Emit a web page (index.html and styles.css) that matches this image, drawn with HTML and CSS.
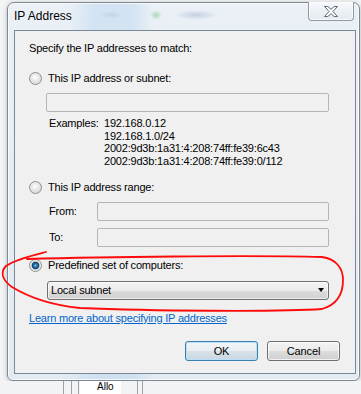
FILE: index.html
```html
<!DOCTYPE html>
<html>
<head>
<meta charset="utf-8">
<link rel="stylesheet" href="styles.css">
</head>
<body>
<div class="window">
  <div class="titlebar">
    <span class="title">IP Address</span>
    <div class="close">
      <svg width="14" height="11" viewBox="0 0 14 11"><polygon points="0.5,0.5 3.8,0.5 7,3.3 10.2,0.5 13.5,0.5 8.9,5.5 13.5,10.5 10.2,10.5 7,7.7 3.8,10.5 0.5,10.5 5.1,5.5" fill="#ffffff" stroke="#5d6874" stroke-width="1" stroke-linejoin="round"/></svg>
    </div>
  </div>
  <div class="client">
    <div class="heading">Specify the IP addresses to match:</div>
    <div class="radio-row r1"><span class="radio"></span><span>This IP address or subnet:</span></div>
    <div class="textbox tb-subnet"></div>
    <div class="examples">
      <span class="ex-label">Examples:</span>
      <div class="ex-list">
        <div>192.168.0.12</div>
        <div>192.168.1.0/24</div>
        <div>2002:9d3b:1a31:4:208:74ff:fe39:6c43</div>
        <div>2002:9d3b:1a31:4:208:74ff:fe39:0/112</div>
      </div>
    </div>
    <div class="radio-row r2"><span class="radio"></span><span>This IP address range:</span></div>
    <div class="range">
      <div class="range-row"><span class="range-label">From:</span><div class="textbox tb-range"></div></div>
      <div class="range-row"><span class="range-label">To:</span><div class="textbox tb-range"></div></div>
    </div>
    <div class="radio-row r3"><span class="radio checked"></span><span>Predefined set of computers:</span></div>
    <div class="combo"><span>Local subnet</span><span class="arrow"></span></div>
    <a class="link" href="#">Learn more about specifying IP addresses</a>
    <div class="buttons">
      <button class="btn default">OK</button>
      <button class="btn">Cancel</button>
    </div>
  </div>
</div>
<div class="desk-bottom">
  <div class="bg w63"></div>
  <div class="vline"></div>
  <div class="bg w7"></div>
  <div class="vline"></div>
  <div class="bg w6"></div>
  <div class="vline"></div>
  <div class="bg w1"></div>
  <div class="cell"><span>Allo</span></div>
  <div class="bg w16"></div>
  <div class="vline"></div>
  <div class="bg w4"></div>
  <div class="vline"></div>
  <div class="bg rest"></div>
</div>
<svg class="annotation" width="361" height="394" viewBox="0 0 361 394">
  <path d="M 27 259 C 100 257, 250 255, 322 257 C 336 259, 343 268, 343 280 C 343 295, 336 305, 322 309 C 280 312, 150 311, 80 308 C 50 305, 30 298, 12 287 C 2 280, 0 272, 6 266 C 16 259, 34 255, 46 252" fill="none" stroke="#ff0a0a" stroke-width="1.8" stroke-linecap="round" stroke-linejoin="round"/>
</svg>
</body>
</html>
```

FILE: styles.css
```css
html, body {
  margin: 0;
  padding: 0;
}
body {
  width: 361px;
  height: 394px;
  overflow: hidden;
  position: relative;
  background: #f3f4f6;
  font-family: "Liberation Sans", Arial, sans-serif;
  color: #000;
}

.window {
  margin: 2px 0 0 7px;
  width: 353px;
  height: 379px;
  box-sizing: border-box;
  border: 1px solid #7d8791;
  border-radius: 7px 7px 6px 6px;
  background:
    radial-gradient(ellipse 6px 5px at 148px 12px, rgba(120, 200, 130, 0.55), rgba(120, 200, 130, 0) 100%),
    radial-gradient(ellipse 22px 5px at 188px 12px, rgba(150, 170, 200, 0.45), rgba(150, 170, 200, 0) 100%),
    radial-gradient(ellipse 12px 4px at 103px 12px, rgba(170, 190, 215, 0.4), rgba(170, 190, 215, 0) 100%),
    linear-gradient(to right, rgba(255,255,255,0) 60px, rgba(190, 215, 240, 0.5) 85px, rgba(190, 215, 240, 0.5) 125px, rgba(255,255,255,0) 145px),
    linear-gradient(to bottom, #eaf0f6, #e2eaf2);
  box-shadow: 0 1px 5px rgba(0, 0, 0, 0.25), inset 0 0 0 1px rgba(255, 255, 255, 0.75);
  display: flex;
  flex-direction: column;
}

.titlebar {
  height: 27px;
  flex: none;
  display: flex;
  justify-content: space-between;
  align-items: flex-start;
  padding: 0 5px 0 6px;
}
.title {
  font-size: 12px;
  line-height: 14px;
  margin-top: 6px;
  color: #000;
}
.close {
  margin-top: -1px;
  width: 46px;
  height: 19px;
  box-sizing: border-box;
  border: 1px solid #8e99a5;
  border-top: none;
  border-radius: 0 0 4px 4px;
  background: linear-gradient(to bottom, #f6f8fb, #e4eaf0);
  box-shadow: inset 0 0 0 1px rgba(255, 255, 255, 0.7);
  display: flex;
  align-items: center;
  justify-content: center;
}
.close svg {
  display: block;
}

.client {
  margin: 0 3px 0 6px;
  height: 344px;
  flex: none;
  box-sizing: border-box;
  border: 1px solid #7b8896;
  background: #f0f0f0;
  font-size: 11px;
  letter-spacing: -0.2px;
  display: flex;
  flex-direction: column;
  align-items: flex-start;
}

.heading {
  margin: 11px 0 0 14px;
  line-height: 13px;
}

.radio-row {
  display: flex;
  align-items: center;
  height: 13px;
  line-height: 13px;
  margin-left: 14px;
  gap: 6px;
}
.r1 { margin-top: 17px; }
.r2 { margin-top: 13px; }
.r3 { margin-top: 12px; }

.radio {
  width: 13px;
  height: 13px;
  box-sizing: border-box;
  border-radius: 50%;
  border: 1px solid #8e8f8f;
  background: radial-gradient(circle at 45% 40%, #ffffff 0, #e6e6e6 45%, #cfcfcf 100%);
  flex: none;
}
.radio.checked {
  background: radial-gradient(circle at 50% 50%, #7cc3ef 0, #2a79b5 1.6px, #123f66 3.4px, #dcdcdc 4.2px, #f2f2f2 5.5px);
}

.textbox {
  box-sizing: border-box;
  height: 19px;
  border: 1px solid #b3b6b9;
  border-radius: 2px;
  background: #f0f0f0;
}
.tb-subnet {
  margin: 8px 0 0 31px;
  width: 283px;
}

.examples {
  display: flex;
  margin: 5px 0 0 34px;
  line-height: 12.7px;
}
.ex-label {
  width: 55px;
  flex: none;
}

.range {
  margin: 8px 0 0 34px;
  display: flex;
  flex-direction: column;
  gap: 7px;
}
.range-row {
  display: flex;
  align-items: center;
  height: 19px;
}
.range-label {
  width: 48px;
  flex: none;
}
.tb-range {
  width: 232px;
}

.combo {
  margin: 9px 0 0 32px;
  width: 282px;
  height: 19px;
  box-sizing: border-box;
  border: 1px solid #707070;
  border-radius: 3px;
  background: linear-gradient(to bottom, #f3f3f3 0, #ebebeb 50%, #dddddd 50%, #cfcfcf 100%);
  box-shadow: inset 0 0 0 1px rgba(255, 255, 255, 0.6);
  display: flex;
  align-items: center;
  justify-content: space-between;
  padding: 0 4px 0 3px;
  line-height: 13px;
}
.arrow {
  width: 0;
  height: 0;
  border-left: 3.5px solid transparent;
  border-right: 3.5px solid transparent;
  border-top: 4px solid #000;
}

.link {
  margin: 12px 0 0 14px;
  line-height: 13px;
  color: #0066cc;
  text-decoration: underline;
}

.buttons {
  margin-top: 16px;
  align-self: stretch;
  display: flex;
  justify-content: flex-end;
  gap: 9px;
  padding-right: 15px;
}
.btn {
  width: 73px;
  height: 20px;
  box-sizing: border-box;
  padding: 0;
  border: 1px solid #707070;
  border-radius: 3px;
  background: linear-gradient(to bottom, #f3f3f3 0, #ebebeb 50%, #dddddd 50%, #cfcfcf 100%);
  box-shadow: inset 0 0 0 1px rgba(255, 255, 255, 0.7);
  font-family: "Liberation Sans", Arial, sans-serif;
  font-size: 11px;
  letter-spacing: -0.1px;
  color: #000;
  line-height: 18px;
}
.btn.default {
  border-color: #3c7fb1;
  background: linear-gradient(to bottom, #f1f5f8 0, #e8eef2 50%, #d8e2e9 50%, #cad7e0 100%);
  box-shadow: inset 0 0 0 1px #b8e0f8;
}

.desk-bottom {
  display: flex;
  height: 13px;
  overflow: hidden;
}
.bg { background: #f2f3f4; height: 13px; }
.w63 { width: 63px; }
.w7 { width: 7px; }
.w6 { width: 6px; }
.w1 { width: 1px; }
.w16 { width: 16px; }
.w4 { width: 4px; }
.rest { flex: 1; }
.vline { width: 1px; height: 13px; background: #9aa3ad; }
.cell {
  width: 41px;
  height: 13px;
  background: #ffffff;
  overflow: hidden;
  font-size: 10px;
}
.cell span {
  display: block;
  padding-left: 17px;
  line-height: 12px;
}

.annotation {
  position: absolute;
  left: 0;
  top: 0;
  pointer-events: none;
}
```
